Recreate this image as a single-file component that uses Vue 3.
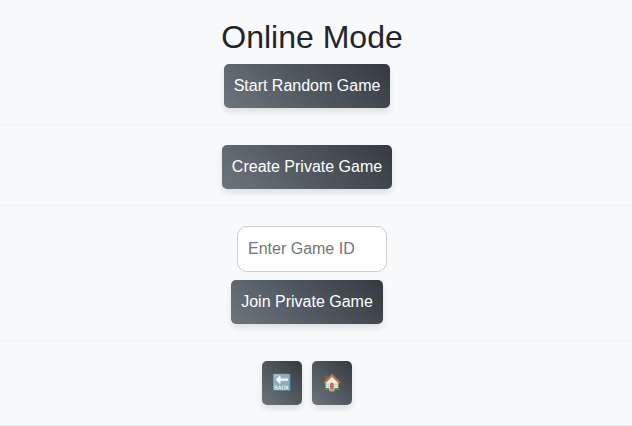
<script setup>
import { ref } from 'vue'

const gameId = ref('')
</script>

<template>
  <main class="page">
    <section class="section intro">
      <h1 class="title">Online Mode</h1>
      <button class="btn" type="button">Start Random Game</button>
    </section>
    <section class="section">
      <button class="btn" type="button">Create Private Game</button>
    </section>
    <section class="section">
      <input v-model="gameId" class="game-input" type="text" placeholder="Enter Game ID" />
      <button class="btn" type="button">Join Private Game</button>
    </section>
    <section class="section nav">
      <button class="btn icon-btn" type="button">🔙</button>
      <button class="btn icon-btn" type="button">🏠</button>
    </section>
  </main>
</template>

<style>
body {
  margin: 0;
  background: #f8f9fb;
}
</style>

<style scoped>
.page {
  box-sizing: border-box;
  height: 426px;
  overflow: hidden;
  background: #f8f9fb;
  color: #212529;
  font-family: "Liberation Sans", "Noto Color Emoji", sans-serif;
  font-size: 16px;
  line-height: 24px;
}
.section {
  display: flex;
  flex-direction: column;
  align-items: center;
  padding: 20px 8px 16px 0;
  border-bottom: 1px solid #f1f2f4;
}
.intro {
  padding-top: 17.6px;
}
.title {
  margin: 0 0 8px;
  font-size: 32px;
  font-weight: 400;
  line-height: 38.4px;
}
.btn {
  box-sizing: border-box;
  height: 44px;
  margin: 0 10px 0 0;
  padding: 10px;
  border: 0;
  border-radius: 5px;
  background: linear-gradient(45deg, #6c757d, #343a40);
  box-shadow: 0 4px 6px rgba(0, 0, 0, 0.1);
  color: #fff;
  font: inherit;
  white-space: nowrap;
}
.game-input {
  box-sizing: border-box;
  width: 150px;
  height: 46px;
  margin-bottom: 8px;
  padding: 10px;
  border: 1px solid #ccc;
  border-radius: 10px;
  background: #fff;
  color: #212529;
  font: inherit;
}
.game-input::placeholder {
  color: #757575;
}
.nav {
  flex-direction: row;
  justify-content: center;
  padding-bottom: 20px;
  border-bottom-color: #e5e7e9;
}
.icon-btn {
  width: 40px;
}
</style>
